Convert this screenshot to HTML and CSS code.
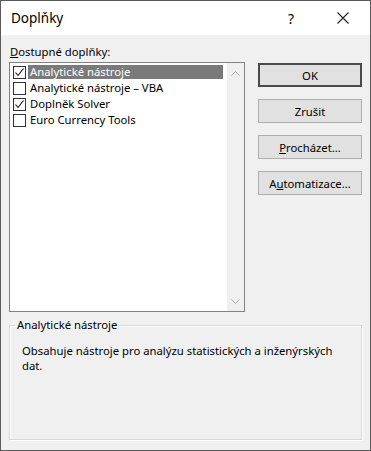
FILE: index.html
```html
<!DOCTYPE html>
<html lang="cs">
<head>
<meta charset="utf-8">
<title>Doplňky</title>
<link rel="stylesheet" href="styles.css">
</head>
<body>
<div class="dialog">
  <div class="titlebar">
    <span class="title">Doplňky</span>
    <span class="help">?</span>
    <span class="close">
      <svg width="12" height="12" viewBox="0 0 12 12"><path d="M0.5 0.5 L11.5 11.5 M11.5 0.5 L0.5 11.5" stroke="#222" stroke-width="1.1" fill="none"/></svg>
    </span>
  </div>
  <div class="body">
    <div class="main">
      <div class="left">
        <div class="label"><u>D</u>ostupné doplňky:</div>
        <div class="listbox">
          <div class="items">
            <div class="row selected">
              <span class="check on"><svg width="11" height="11" viewBox="0 0 11 11"><path d="M1.5 5.5 L4 8.5 L9.5 1.5" stroke="#111" stroke-width="1.1" fill="none"/></svg></span>
              <span class="text">Analytické nástroje</span>
            </div>
            <div class="row">
              <span class="check"></span>
              <span class="text">Analytické nástroje – VBA</span>
            </div>
            <div class="row">
              <span class="check on"><svg width="11" height="11" viewBox="0 0 11 11"><path d="M1.5 5.5 L4 8.5 L9.5 1.5" stroke="#111" stroke-width="1.1" fill="none"/></svg></span>
              <span class="text">Doplněk Solver</span>
            </div>
            <div class="row">
              <span class="check"></span>
              <span class="text">Euro Currency Tools</span>
            </div>
          </div>
          <div class="scrollbar">
            <svg class="arrow" width="9" height="5" viewBox="0 0 9 5"><path d="M0.5 4.5 L4.5 0.5 L8.5 4.5" stroke="#a6a6a6" stroke-width="1" fill="none"/></svg>
            <svg class="arrow" width="9" height="5" viewBox="0 0 9 5"><path d="M0.5 0.5 L4.5 4.5 L8.5 0.5" stroke="#a6a6a6" stroke-width="1" fill="none"/></svg>
          </div>
        </div>
      </div>
      <div class="buttons">
        <button class="btn default">OK</button>
        <button class="btn">Zrušit</button>
        <button class="btn"><u>P</u>rocházet...</button>
        <button class="btn">A<u>u</u>tomatizace...</button>
      </div>
    </div>
    <fieldset class="group">
      <legend>Analytické nástroje</legend>
      <p class="desc">Obsahuje nástroje pro analýzu statistických a inženýrských dat.</p>
    </fieldset>
  </div>
</div>
</body>
</html>
```
FILE: styles.css
```css
html, body {
  margin: 0;
  padding: 0;
  background: #fff;
}
body {
  font-family: "Noto Sans", "Segoe UI", sans-serif;
  font-size: 11.3px;
  color: #000;
}
.dialog {
  width: 371px;
  height: 451px;
  box-sizing: border-box;
  border: 1px solid #5a5a5a;
  display: flex;
  flex-direction: column;
}
.titlebar {
  height: 34px;
  flex: none;
  background: #fff;
  display: flex;
  align-items: center;
  padding-left: 10px;
}
.title {
  font-size: 13.5px;
  flex: 1;
}
.help {
  font-size: 14px;
  margin-right: 43px;
}
.close {
  display: flex;
  margin-right: 21px;
}
.body {
  flex: 1;
  background: #f0f0f0;
  padding: 9px 8px 10px 8px;
  display: flex;
  flex-direction: column;
}
.main {
  display: flex;
  gap: 13px;
}
.left {
  width: 236px;
}
.label {
  line-height: 16px;
  padding-left: 1px;
  margin-bottom: 2px;
}
.listbox {
  height: 250px;
  box-sizing: border-box;
  border: 1px solid #828282;
  background: #fff;
  display: flex;
}
.items {
  flex: 1;
  padding-top: 1px;
}
.row {
  height: 16px;
  display: flex;
  align-items: center;
  padding-left: 3px;
  margin-right: 4px;
}
.check {
  width: 13px;
  height: 13px;
  box-sizing: border-box;
  border: 1px solid #333;
  background: #fff;
  display: flex;
  align-items: center;
  justify-content: center;
  flex: none;
}
.text {
  flex: 1;
  margin-left: 2px;
  padding-left: 2px;
  line-height: 14px;
  white-space: nowrap;
}
.row.selected .text {
  background: #7a7a7a;
  color: #fff;
}
.scrollbar {
  width: 17px;
  background: #f0f0f0;
  display: flex;
  flex-direction: column;
  justify-content: space-between;
  align-items: center;
  padding: 8px 0 7px;
}
.arrow {
  display: block;
}
.buttons {
  width: 104px;
  padding-top: 19px;
  display: flex;
  flex-direction: column;
  gap: 12px;
}
.btn {
  height: 24px;
  box-sizing: border-box;
  border: 1px solid #adadad;
  background: #e1e1e1;
  font-family: inherit;
  font-size: 11.3px;
  color: #000;
  padding: 0;
  margin: 0;
}
.btn.default {
  border: 2px solid #4a4a4a;
}
.group {
  margin: 5px 0 0 0;
  padding: 0 12px;
  flex: 1;
  border: 1px solid #d7d7d7;
  box-shadow: inset 1px 1px 0 #fff, 1px 1px 0 #fff;
  min-width: 0;
}
.group legend {
  padding: 0 2px;
  margin-left: -7px;
  line-height: 16px;
}
.desc {
  margin: 10px 0 0 0;
  line-height: 15px;
  max-width: 318px;
}
```
